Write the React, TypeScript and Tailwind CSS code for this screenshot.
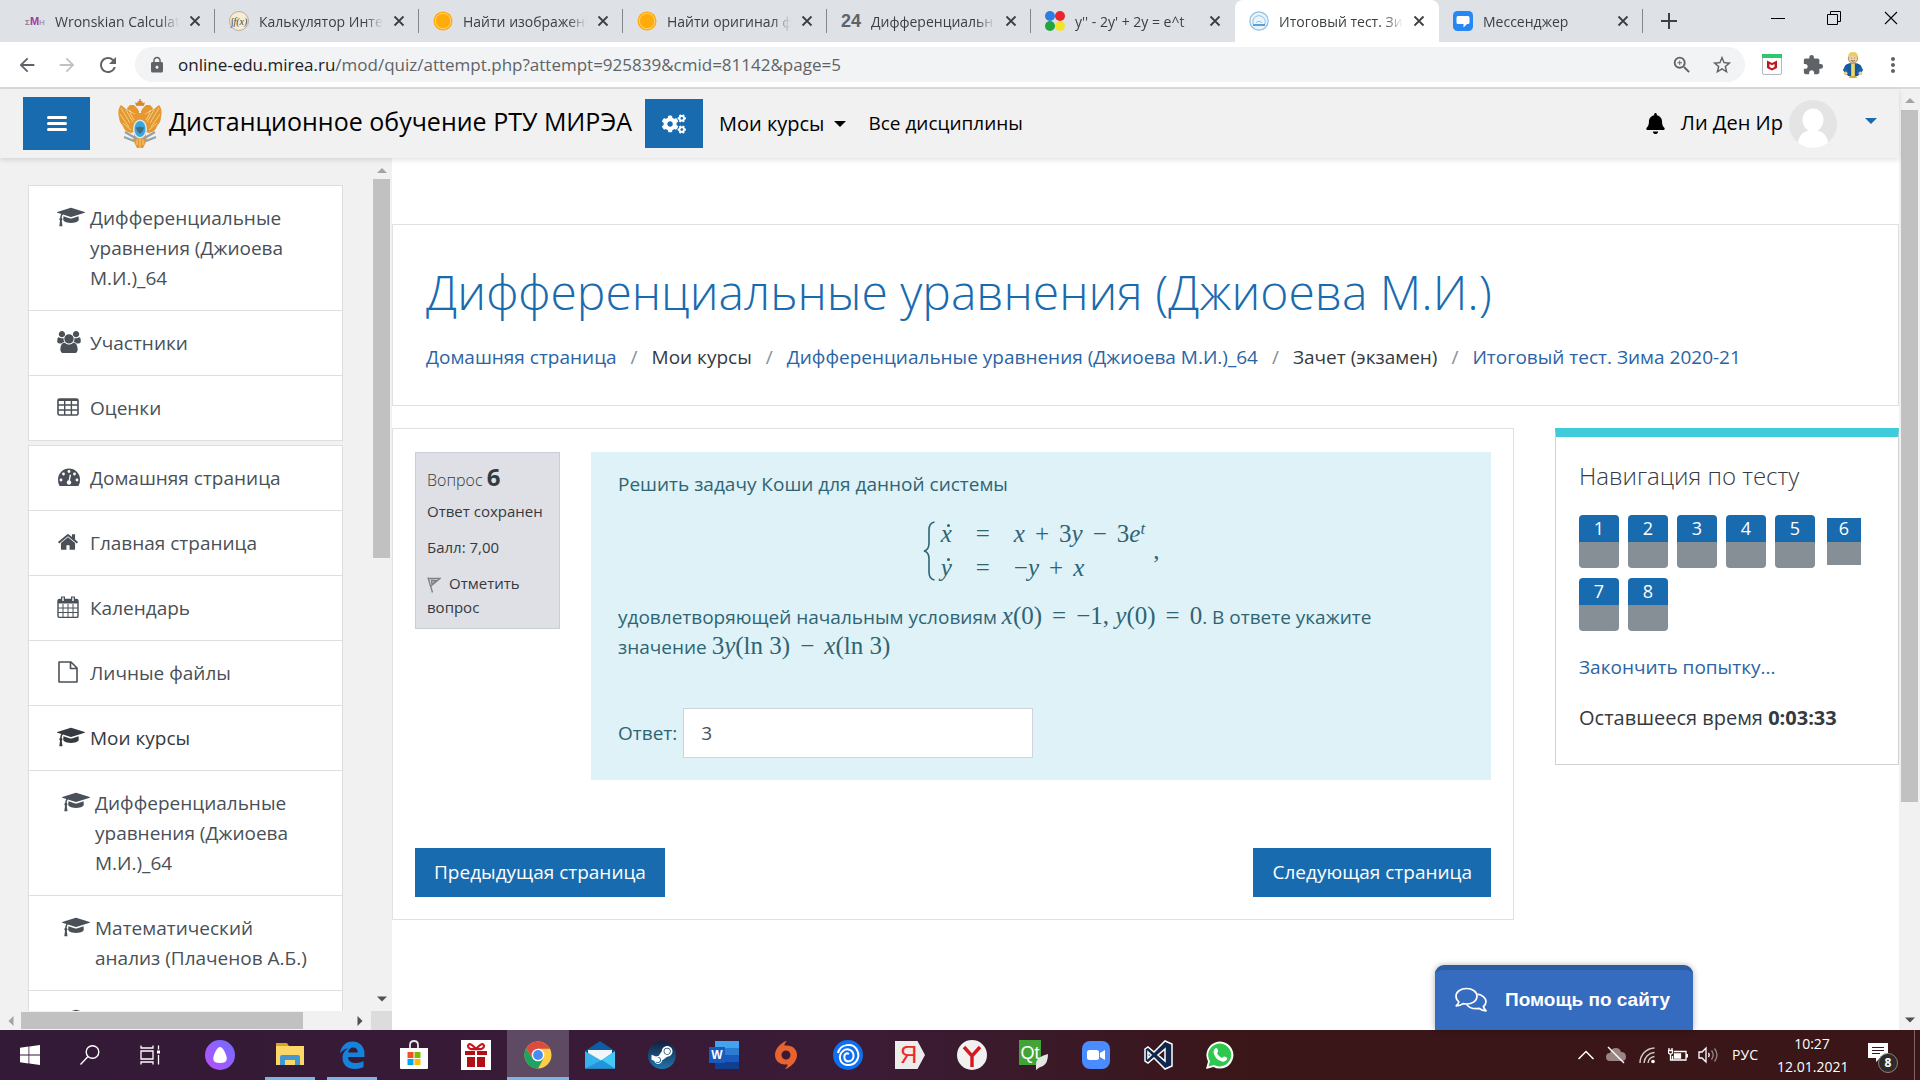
import React from "react";
import { FaBell, FaCogs, FaSteamSymbol } from "react-icons/fa";
import {
  MdArrowBack,
  MdArrowForward,
  MdExtension,
  MdLock,
  MdMoreVert,
  MdRefresh,
  MdStarBorder,
  MdZoomIn,
} from "react-icons/md";

/* ---------- small drawings ---------- */

const CapIcon = () => (
  <svg viewBox="0 0 2304 1792" className="h-[22px] w-7" fill="currentColor">
    <path d="M1774 836l16 284q4 72-82 133.5t-235 97.5-321 36-321-36-235-97.5-82-133.5l16-284 551 174q34 10 71 10t71-10zm530-324q0 23-22 31l-1120 352q-4 1-10 1t-10-1l-652-206q-43 34-71 111.5t-34 178.5q63 36 63 109 0 69-58 107l58 433q2 14-8 25-9 11-24 11h-192q-15 0-24-11-10-11-8-25l58-433q-58-38-58-107 0-73 65-111 11-207 98-330l-333-104q-22-8-22-31t22-31l1120-352q4-1 10-1t10 1l1120 352q22 8 22 31z" />
  </svg>
);

const UsersIcon = () => (
  <svg viewBox="0 0 1920 1792" className="h-[22px] w-6" fill="currentColor">
    <path d="M593 896q-162 5-265 128h-134q-82 0-138-40.5t-56-118.5q0-353 124-353 6 0 43.5 21t97.5 42.5 119 21.5q67 0 133-23-5 37-5 66 0 139 81 256zm1071 637q0 120-73 189.5t-194 69.5h-874q-121 0-194-69.5t-73-189.5q0-53 3.5-103.5t14-109 26.5-108.5 43-97.5 62-81 85.5-53.5 111.5-20q10 0 43 21.5t73 48 107 48 135 21.5 135-21.5 107-48 73-48 43-21.5q61 0 111.5 20t85.5 53.5 62 81 43 97.5 26.5 108.5 14 109 3.5 103.5zm-1024-1277q0 106-75 181t-181 75-181-75-75-181 75-181 181-75 181 75 75 181zm704 384q0 159-112.5 271.5t-271.5 112.5-271.5-112.5-112.5-271.5 112.5-271.5 271.5-112.5 271.5 112.5 112.5 271.5zm576 225q0 78-56 118.5t-138 40.5h-134q-103-123-265-128 81-117 81-256 0-29-5-66 66 23 133 23 59 0 119-21.5t97.5-42.5 43.5-21q124 0 124 353zm-128-609q0 106-75 181t-181 75-181-75-75-181 75-181 181-75 181 75 75 181z" />
  </svg>
);

const TableIcon = () => (
  <svg viewBox="0 0 22 20" className="h-5 w-[22px]" fill="none" stroke="currentColor">
    <rect x="1" y="2" width="20" height="16" rx="1.5" strokeWidth="1.6" />
    <path d="M1 3h20" strokeWidth="2" />
    <path d="M1 8h20M1 13h20M7.7 3v15M14.4 3v15" strokeWidth="1.4" />
  </svg>
);

const GaugeIcon = () => (
  <svg viewBox="0 0 24 20" className="h-5 w-6">
    <path d="M2.6 19A11 11 0 0 1 1 12.5 11 11 0 0 1 23 12.5 11 11 0 0 1 21.4 19Z" fill="currentColor" />
    <g fill="#fff">
      <circle cx="4" cy="13" r="1.4" />
      <circle cx="6.5" cy="7" r="1.4" />
      <circle cx="12" cy="4.5" r="1.4" />
      <circle cx="17.5" cy="7" r="1.4" />
      <circle cx="20" cy="13" r="1.4" />
      <circle cx="12" cy="15.5" r="2.2" />
      <path d="M12.7 7.5l1.4.4-1.6 7h-1.2z" />
    </g>
  </svg>
);

const HomeIcon = () => (
  <svg viewBox="0 0 1792 1792" className="size-[22px]" fill="currentColor">
    <path d="M1472 992v480q0 26-19 45t-45 19h-384v-384h-256v384h-384q-26 0-45-19t-19-45v-480q0-1 .5-3t.5-3l575-474 575 474q1 2 1 6zm223-69l-62 74q-8 9-21 11h-3q-13 0-21-7l-692-577-692 577q-12 8-24 7-13-2-21-11l-62-74q-8-10-7-23.500t11-21.500l719-599q32-26 76-26t76 26l244 204v-195q0-14 9-23t23-9h192q14 0 23 9t9 23v408l219 182q10 8 11 21.500t-7 23.500z" />
  </svg>
);

const CalendarIcon = () => (
  <svg viewBox="0 0 22 22" className="size-[22px]" fill="none" stroke="currentColor">
    <rect x="1" y="3.5" width="20" height="18" rx="1.5" strokeWidth="1.4" />
    <path d="M1 5.5h20" strokeWidth="4" />
    <path d="M1 12h20M1 16.5h20M6 8v13M11 8v13M16 8v13" strokeWidth="1" />
    <path d="M6 .5v5M16 .5v5" strokeWidth="4" />
    <path d="M6 1.500v3.500M16 1.500v3.500" strokeWidth="1.4" stroke="#fff" />
  </svg>
);

const FileIcon = () => (
  <svg viewBox="0 0 22 22" className="size-[22px]" fill="none" stroke="currentColor" strokeWidth="1.6">
    <path d="M2 1h12l6 6v14H2zM13.500 1v6.500H20" strokeLinejoin="round" />
  </svg>
);

const Eagle = () => (
  <svg viewBox="0 0 44 50" className="h-[50px] w-11 flex-none">
    <g fill="#e5982f">
      <path d="M17 15C13 14 9 11 3 6c-3 3-3 9-2 12 0 4 2 7 4 9 1 4 4 6 8 7l6-2z" />
      <path d="M27 15c4-1 8-4 14-9 3 3 3 9 2 12 0 4-2 7-4 9-1 4-4 6-8 7l-6-2z" />
      <path d="M21 15l-6-1-4-3-1 1-1-3 3-3 4 0 3 3 2 3zM23 15l6-1 4-3 1 1 1-3-3-3-4 0-3 3-2 3z" />
      <path d="M17 33h10l2 8-4 8h-6l-4-8z" />
      <path d="M18 7l-1-4 2 1 1-2h4l1 2 2-1-1 4z" />
      <rect x="14" y="14" width="16" height="18" rx="5" />
    </g>
    <g stroke="#f8d58a" strokeWidth=".9" fill="none">
      <path d="M3 9l9 15M2 15l9 13M5 24l8 7M8 11l7 12M12 14l4 7" />
      <path d="M41 9l-9 15M42 15l-9 13M39 24l-8 7M36 11l-7 12M32 14l-4 7" />
      <path d="M19 40v6M22 40v9M25 40v6" />
    </g>
    <path d="M18 5h8M22 0v4" stroke="#c9762c" strokeWidth="1.2" fill="none" />
    <path d="M7 33l12 7M37 33l-12 7M6 38l10 4M38 38l-10 4" stroke="#97a0a8" strokeWidth="2.2" />
    <ellipse cx="22" cy="30" rx="7" ry="9.5" fill="#dfe7ee" />
    <ellipse cx="22" cy="30" rx="5.5" ry="8" fill="#38a8dc" />
    <path d="M18 29c2-3 3 2 4-3 1 5 3 0 4 3-1 3-2 4-4 6-2-2-3-3-4-6z" fill="#3c6f86" />
  </svg>
);

const ChatIcon = () => (
  <svg viewBox="0 0 32 26" className="h-[26px] w-8" fill="none" stroke="#fff" strokeWidth="1.7" strokeLinejoin="round">
    <path d="M11.500 1.500c6 0 10.500 3.300 10.500 7.800s-4.500 7.700-10.500 7.700c-1.200 0-2.400-.1-3.500-.4C6.300 18 4 18.800 1.200 18.900c1.300-1.200 2.300-2.600 2.600-4.100C2 13.400 1 11.500 1 9.300c0-4.500 4.500-7.800 10.500-7.800z" />
    <path d="M22.500 7.200c4.800.7 8.500 3.800 8.500 7.300 0 2-1 3.700-2.600 5 .3 1.500 1.300 2.900 2.600 4.300-2.800-.1-5.100-.9-6.800-2.400-1 .2-2.100.3-3.200.3-4.200 0-7.600-1.700-9.300-4.300" />
  </svg>
);

const Triangle = ({ dir, cls }: { dir: "up" | "down" | "left" | "right"; cls: string }) => {
  const d = {
    up: "M5 2l5 5H0z",
    down: "M0 2.500h10l-5 5z",
    left: "M7.500 0v10l-5-5z",
    right: "M2.500 0v10l5-5z",
  }[dir];
  return (
    <svg viewBox="0 0 10 10" className={"flex-none " + cls} fill="currentColor">
      <path d={d} />
    </svg>
  );
};

/* ---------- browser chrome ---------- */

const SunFavicon = () => (
  <svg viewBox="0 0 20 20" className="size-5">
    <circle cx="10" cy="10" r="9.5" fill="#ffab0a" />
    <circle cx="10" cy="10" r="7.7" fill="none" stroke="#ffd68a" strokeWidth=".9" />
  </svg>
);

const tabs: { title: string; icon: React.ReactNode; active?: boolean }[] = [
  {
    title: "Wronskian Calculator",
    icon: (
      <span className="font-['Liberation_Sans'] text-[11px] font-bold text-[#a9379d]">
        <span className="text-[8px] text-[#8a7f8a]">Σ</span>M<span className="text-[8px] text-[#a9a0a9]">H</span>
      </span>
    ),
  },
  {
    title: "Калькулятор Интегралов",
    icon: (
      <span className="flex size-5 items-center justify-center rounded-full border border-[#b9ad96] bg-[#f5ecd6] font-['Liberation_Serif'] text-[10px] italic text-[#4a4336]">
        ∫f(x)
      </span>
    ),
  },
  { title: "Найти изображение", icon: <SunFavicon /> },
  { title: "Найти оригинал функции", icon: <SunFavicon /> },
  {
    title: "Дифференциальные",
    icon: <span className="font-['Liberation_Sans'] text-lg font-bold text-[#5f6368]">24</span>,
  },
  {
    title: "y'' - 2y' + 2y = e^t",
    icon: (
      <svg viewBox="0 0 20 20" className="size-5">
        <circle cx="5" cy="5" r="5" fill="#2f7de1" />
        <circle cx="15" cy="5" r="5" fill="#e8252a" />
        <circle cx="5" cy="15" r="5" fill="#22a53a" />
        <circle cx="15" cy="15" r="5" fill="#f2e32c" />
      </svg>
    ),
  },
  {
    title: "Итоговый тест. Зима",
    active: true,
    icon: (
      <svg viewBox="0 0 20 20" className="size-5" fill="none" stroke="#8fc1e6">
        <circle cx="10" cy="10" r="9.2" strokeWidth="1.2" fill="#eaf4fb" />
        <path d="M4 13V9a6 6 0 0 1 12 4M7 12a3.500 3.500 0 0 1 6 0" />
        <path d="M4 14h12" stroke="#5ba1d6" strokeWidth="2" />
      </svg>
    ),
  },
  {
    title: "Мессенджер",
    icon: (
      <svg viewBox="0 0 20 20" className="size-5">
        <rect width="20" height="20" rx="4.5" fill="#2787f5" />
        <path d="M5 5h10q1.500 0 1.500 1.500v5q0 1.500-1.500 1.500h-1l-3.500 3.500V13H5q-1.500 0-1.500-1.500v-5Q3.500 5 5 5z" fill="#fff" />
      </svg>
    ),
  },
];

const CrossIcon = ({ cls }: { cls: string }) => (
  <svg viewBox="0 0 12 12" className={cls} fill="none" stroke="currentColor">
    <path d="M1.500 1.500l9 9M10.500 1.500l-9 9" />
  </svg>
);

function TabStrip() {
  return (
    <div className="flex h-[42px] flex-none justify-between bg-[#dee1e6] pl-[11px]">
      <div className="flex min-w-0 flex-1">
        {tabs.map((t, i) => (
          <div
            key={t.title}
            className={
              "flex w-[204px] min-w-0 items-center pl-3.5 " + (t.active ? "rounded-t-lg bg-white" : "")
            }
          >
            <span className="flex w-5 flex-none items-center justify-center whitespace-nowrap">{t.icon}</span>
            <span className="ml-2.5 w-[124px] overflow-hidden whitespace-nowrap text-[14px] text-[#3c4043] [mask-image:linear-gradient(to_right,#000_85%,transparent)]">
              {t.title}
            </span>
            <button aria-label="Закрыть вкладку" className="ml-2 flex size-4 flex-none items-center justify-center text-[#3c4043]">
              <CrossIcon cls="size-3 stroke-[1.8]" />
            </button>
            <span className={"ml-auto h-6 w-px " + (t.active || i === 5 ? "bg-transparent" : "bg-[#83868b]")} />
          </div>
        ))}
        <button aria-label="Новая вкладка" className="ml-[18px] flex items-center text-[#3c4043]">
          <svg viewBox="0 0 16 16" className="size-4" stroke="currentColor" strokeWidth="2">
            <path d="M8 0v16M0 8h16" />
          </svg>
        </button>
      </div>
      <div className="flex h-9 text-black">
        <button aria-label="Свернуть" className="flex w-14 items-center justify-center">
          <span className="h-px w-3.5 bg-current" />
        </button>
        <button aria-label="Развернуть" className="flex w-14 items-center justify-center">
          <svg viewBox="0 0 14 14" className="size-3.5" fill="none" stroke="currentColor">
            <path d="M.5 3.500h10v10h-10zM3.500 3.500v-3h10v10h-3" />
          </svg>
        </button>
        <button aria-label="Закрыть" className="flex w-[58px] items-center justify-center">
          <CrossIcon cls="size-4 stroke-[0.8]" />
        </button>
      </div>
    </div>
  );
}

function Toolbar() {
  return (
    <div className="flex h-[47px] flex-none items-center border-b-2 border-[#d9dadc] bg-white pl-4 pr-[15px] text-[#5f6368]">
      <button aria-label="Назад" className="w-[22px] text-[22px]">
        <MdArrowBack />
      </button>
      <button aria-label="Вперёд" className="ml-[18px] w-[22px] text-[22px] text-[#bfc1c4]">
        <MdArrowForward />
      </button>
      <button aria-label="Обновить" className="ml-[18px] w-6 text-2xl">
        <MdRefresh />
      </button>
      <div className="ml-[15px] flex h-[35px] flex-1 items-center rounded-full bg-[#f1f3f4] pl-[13px] pr-3">
        <MdLock className="size-[18px] flex-none" />
        <div role="textbox" aria-label="Адресная строка" className="ml-3 flex-1 whitespace-nowrap text-[17px]">
          <span className="text-[#202124]">online-edu.mirea.ru</span>
          <span>/mod/quiz/attempt.php?attempt=925839&amp;cmid=81142&amp;page=5</span>
        </div>
        <button aria-label="Масштаб" className="text-[22px]">
          <MdZoomIn />
        </button>
        <button aria-label="В закладки" className="ml-[18px] text-[22px]">
          <MdStarBorder />
        </button>
      </div>
      <svg viewBox="0 0 20 21" className="ml-[17px] h-[21px] w-5">
        <rect x=".5" y=".5" width="19" height="20" rx="1.5" fill="#fff" stroke="#b5b8bb" />
        <path d="M0 0h20v4H0z" fill="#2dc76d" />
        <path d="M5 6.500l5 2.500 5-2.500v7.500l-5 2.500-5-2.500zM7.500 10v3l2.500 1.300 2.500-1.300v-3L10 11.200z" fill="#c01818" fillRule="evenodd" />
      </svg>
      <MdExtension className="ml-5 size-[22px]" />
      <svg viewBox="0 0 26 28" className="ml-[17px] h-7 w-6">
        <path d="M3 18q1-5 6-6h8q5 1 6 6l-1 5-4 3H8l-4-3z" fill="#17589c" />
        <path d="M11 12h4v14h-4z" fill="#eed66b" />
        <path d="M2 19l4-3 3 6-4 3zM24 19l-4-3-3 6 4 3z" fill="#1a62ad" />
        <circle cx="5" cy="23" r="2" fill="#efc999" />
        <circle cx="21" cy="23" r="2" fill="#efc999" />
        <circle cx="13" cy="7" r="5" fill="#f1d0a4" stroke="#5b4b2c" strokeWidth=".6" />
        <path d="M8 6q-1-6 5-6 6 0 5 6-2-2-5-2T8 6z" fill="#e9cf62" />
        <path d="M11 6.500h.8M14.500 6.500h.8M11 9.200q2 1.300 4 0" stroke="#4a3a22" strokeWidth=".8" fill="none" />
        <path d="M9 26h8v2H9z" fill="#caa43b" />
      </svg>
      <button aria-label="Меню" className="ml-4 text-2xl">
        <MdMoreVert />
      </button>
    </div>
  );
}

/* ---------- page ---------- */

function SiteHeader() {
  return (
    <header className="z-10 flex h-[69px] flex-none items-center bg-[#f1f1f1] pl-[23px] pr-[22px] text-black shadow-[0_2px_5px_rgba(0,0,0,0.12)]">
      <button aria-label="Меню сайта" className="flex h-[53px] w-[67px] items-center justify-center bg-[#196bb0]">
        <span className="flex w-5 flex-col gap-[3px]">
          <span className="h-[3px] rounded-sm bg-white" />
          <span className="h-[3px] rounded-sm bg-white" />
          <span className="h-[3px] rounded-sm bg-white" />
        </span>
      </button>
      <a href="#home" className="ml-7 flex items-center">
        <Eagle />
        <span className="ml-[7px] whitespace-nowrap pb-1 text-[25px]">Дистанционное обучение РТУ МИРЭА</span>
      </a>
      <button aria-label="Настройки" className="ml-[13px] flex h-[49px] w-[58px] items-center justify-center bg-[#196bb0] text-2xl text-white">
        <FaCogs />
      </button>
      <button className="ml-4 flex items-center whitespace-nowrap text-[20px]">
        Мои курсы <Triangle dir="down" cls="ml-2.5 size-3" />
      </button>
      <a href="#all" className="ml-[22px] whitespace-nowrap text-[19px]">
        Все дисциплины
      </a>
      <div className="ml-auto flex items-center">
        <FaBell className="size-[21px]" />
        <span className="ml-[15px] whitespace-nowrap pb-0.5 text-[20px]">Ли Ден Ир</span>
        <svg viewBox="0 0 48 48" className="ml-1.5 size-12">
          <clipPath id="ava">
            <circle cx="24" cy="24" r="24" />
          </clipPath>
          <g clipPath="url(#ava)">
            <path d="M0 0h48v48H0z" fill="#e4e4e4" />
            <ellipse cx="24" cy="20" rx="10.5" ry="11.5" fill="#fff" />
            <path d="M8 50q0-20 16-20t16 20z" fill="#fff" />
          </g>
        </svg>
        <Triangle dir="down" cls="mb-1.5 ml-7 size-3 text-[#196bb0]" />
      </div>
    </header>
  );
}

type Item = { label: string; icon: React.ReactNode; nested?: boolean; current?: boolean };

const courseItems: Item[] = [
  { label: "Дифференциальные уравнения (Джиоева М.И.)_64", icon: <CapIcon /> },
  { label: "Участники", icon: <UsersIcon /> },
  { label: "Оценки", icon: <TableIcon /> },
];

const siteItems: Item[] = [
  { label: "Домашняя страница", icon: <GaugeIcon /> },
  { label: "Главная страница", icon: <HomeIcon /> },
  { label: "Календарь", icon: <CalendarIcon /> },
  { label: "Личные файлы", icon: <FileIcon /> },
  { label: "Мои курсы", icon: <CapIcon />, current: true },
  { label: "Дифференциальные уравнения (Джиоева М.И.)_64", icon: <CapIcon />, nested: true },
  { label: "Математический анализ (Плаченов А.Б.)", icon: <CapIcon />, nested: true },
];

const NavList = ({ items, children }: { items: Item[]; children?: React.ReactNode }) => (
  <ul className="flex-none border border-[#dcdedf] bg-white">
    {items.map((it) => (
      <li key={it.label} className="border-b border-[#dcdedf] last:border-b-0">
        <a
          href="#nav"
          className={
            "flex py-[17px] pr-5 text-[19px] leading-[30px] " +
            (it.nested ? "pl-[33px] " : "pl-7 ") +
            (it.current ? "text-[#343a40]" : "text-[#495057]")
          }
        >
          <span className="flex h-[30px] w-[33px] flex-none items-center pb-0.5">{it.icon}</span>
          <span>{it.label}</span>
        </a>
      </li>
    ))}
    {children}
  </ul>
);

function Sidebar() {
  return (
    <aside className="flex w-[392px] flex-none flex-col bg-[#f1f1f1]">
      <div className="flex min-h-0 flex-1">
        <nav className="flex min-h-0 flex-1 flex-col gap-1 overflow-hidden pl-7 pr-7 pt-[27px]">
          <NavList items={courseItems} />
          <NavList items={siteItems}>
            <li>
              <a href="#nav" aria-label="Следующий курс" className="block py-[17px] pl-[33px] text-[#495057]">
                <CapIcon />
              </a>
            </li>
          </NavList>
        </nav>
        <div className="flex w-[21px] flex-col items-center pb-[7px] pt-2 text-[#a3a3a3]">
          <Triangle dir="up" cls="size-2.5" />
          <div className="mt-[3px] h-[379px] w-[17px] bg-[#c1c1c1]" />
          <Triangle dir="down" cls="mt-auto size-2.5 text-[#505050]" />
        </div>
      </div>
      <div className="flex h-[19px] flex-none items-center pl-1.5 text-[#a3a3a3]">
        <Triangle dir="left" cls="size-2.5" />
        <div className="ml-[5px] h-[17px] w-[282px] bg-[#c1c1c1]" />
        <Triangle dir="right" cls="ml-auto mr-[6px] size-2.5 text-[#505050]" />
        <div className="h-full w-[21px] bg-[#dcdcdc]" />
      </div>
    </aside>
  );
}

const V = ({ children }: { children: string }) => <i>{children}</i>;
const Op = ({ children }: { children: string }) => <span className="mx-2.5">{children}</span>;
const Dot = ({ children }: { children: string }) => (
  <span className="relative inline-block">
    <i>{children}</i>
    <span className="absolute left-1.5 top-[7px] size-[3px] rounded-full bg-current" />
  </span>
);

function Formula() {
  return (
    <div className="mt-[18px] flex items-center justify-center font-['Liberation_Serif'] text-[25px]">
      <svg viewBox="0 0 12 60" className="h-[60px] w-3" fill="none" stroke="currentColor" strokeWidth="1.6">
        <path d="M11.500 1Q6 2 6 9v13q0 7-5 8 5 1 5 8v13q0 7 5.500 8" />
      </svg>
      <div className="ml-1.5 grid grid-cols-[auto_auto_auto] gap-x-6 leading-[34px]">
        <Dot>x</Dot>
        <span>=</span>
        <span>
          <V>x</V>
          <Op>+</Op>3<V>y</V>
          <Op>−</Op>3<V>e</V>
          <sup className="text-[17px] leading-none">
            <V>t</V>
          </sup>
        </span>
        <Dot>y</Dot>
        <span>=</span>
        <span>
          −<V>y</V>
          <Op>+</Op>
          <V>x</V>
        </span>
      </div>
      <span className="ml-2">,</span>
    </div>
  );
}

const crumbs: { t: string; link: boolean }[] = [
  { t: "Домашняя страница", link: true },
  { t: "Мои курсы", link: false },
  { t: "Дифференциальные уравнения (Джиоева М.И.)_64", link: true },
  { t: "Зачет (экзамен)", link: false },
  { t: "Итоговый тест. Зима 2020-21", link: true },
];

function Main() {
  return (
    <main className="relative min-w-0 flex-1 bg-white pt-[66px] text-[#343a40]">
      <div className="border border-[#dfe1e3] px-[33px] pb-8 pt-8">
        <h1 className="whitespace-nowrap text-5xl font-light leading-[70px] text-[#196bb0]">
          Дифференциальные уравнения (Джиоева М.И.)
        </h1>
        <ol className="mt-[14px] flex text-[19px] leading-8">
          {crumbs.map((c, i) => (
            <li key={c.t} className="whitespace-nowrap">
              {i > 0 && <span className="mx-3.5 text-[#868e96]">/</span>}
              {c.link ? (
                <a href="#crumb" className="text-[#2b64a5]">
                  {c.t}
                </a>
              ) : (
                c.t
              )}
            </li>
          ))}
        </ol>
      </div>

      <div className="mt-[22px] flex items-start gap-[41px]">
        <section className="flex-1 border border-[#dfe1e3] px-[22px] pb-[22px] pt-[23px]">
          <div className="flex items-start gap-[31px]">
            <div className="w-[145px] flex-none border border-[#c9ced6] bg-[#dee0e6] px-[11px] pb-[9px] pt-2 text-[15px] leading-6">
              <h3 className="text-base font-light leading-[34px]">
                Вопрос <span className="text-2xl font-bold">6</span>
              </h3>
              <div className="mt-0.5 whitespace-nowrap">Ответ сохранен</div>
              <div className="mt-3">Балл: 7,00</div>
              <a href="#flag" className="mt-3 block">
                <svg viewBox="0 0 14 16" className="mr-2 inline-block h-4 w-3.5" fill="none" stroke="#7d8288" strokeWidth="1.4">
                  <path d="M1 .5l4.500 15M1.500 1.500h11.500L4 9M4.500 3.500l5 .2-4.500 3.500z" />
                </svg>
                Отметить вопрос
              </a>
            </div>
            <div className="min-w-0 flex-1 bg-[#def2f8] px-[27px] pb-[22px] pt-[17px] text-[19px] leading-[30px] text-[#2f6473]">
              <p>Решить задачу Коши для данной системы</p>
              <Formula />
              <p className="mt-[17px] max-w-[800px]">
                удовлетворяющей начальным условиям{" "}
                <span className="font-['Liberation_Serif'] text-[25px] leading-none">
                  <V>x</V>(0)<Op>=</Op>−1, <V>y</V>(0)<Op>=</Op>0
                </span>
                . В ответе укажите значение{" "}
                <span className="whitespace-nowrap font-['Liberation_Serif'] text-[25px] leading-none">
                  3<V>y</V>(ln 3)<Op>−</Op>
                  <V>x</V>(ln 3)
                </span>
              </p>
              <div className="mt-[46px] flex items-center">
                <label htmlFor="answer">Ответ:</label>
                <input
                  id="answer"
                  defaultValue="3"
                  className="ml-1.5 h-[50px] w-[350px] border border-[#ced4da] bg-white px-[17px] text-[19px] text-[#495057]"
                />
              </div>
            </div>
          </div>
          <div className="mt-[68px] flex items-center justify-between text-[19px] text-white">
            <button className="h-[49px] bg-[#196bb0] px-[19px]">Предыдущая страница</button>
            <button className="h-[49px] bg-[#196bb0] px-[19px]">Следующая страница</button>
          </div>
        </section>

        <section className="w-[344px] flex-none border border-t-[9px] border-[#cfd3d6] border-t-[#3fcbda] px-[23px] pb-[31px] pt-[22px] text-[20px] leading-[30px]">
          <h2 className="text-2xl font-light leading-[34px]">Навигация по тесту</h2>
          <div className="mt-[22px] flex flex-wrap gap-x-[9px] gap-y-2.5">
            {[1, 2, 3, 4, 5, 6, 7, 8].map((n) => (
              <a
                key={n}
                href="#q"
                className={
                  "flex h-[53px] w-10 flex-col overflow-hidden text-center text-lg text-white " +
                  (n === 6 ? "border-[3px] border-white leading-[21px]" : "rounded leading-[27px]")
                }
              >
                <span className="flex-1 bg-[#196bb0]">{n}</span>
                <span className="flex-1 bg-[#868e96]" />
              </a>
            ))}
          </div>
          <a href="#finish" className="mt-[21px] block text-[19px] text-[#2b64a5]">
            Закончить попытку...
          </a>
          <div className="mt-[21px]">
            Оставшееся время <b>0:03:33</b>
          </div>
        </section>
      </div>

      <button className="absolute bottom-0 right-[206px] flex h-[65px] w-[258px] items-center rounded-t-[9px] border-t-[5px] border-[#2b5ba3] bg-[#366cbf] pl-5 font-['Liberation_Sans'] text-[19px] font-bold text-white shadow-[0_0_6px_rgba(0,0,0,0.3)]">
        <ChatIcon />
        <span className="ml-[18px] whitespace-nowrap">Помощь по сайту</span>
      </button>
    </main>
  );
}

/* ---------- taskbar ---------- */

const Svg = ({ children }: { children: React.ReactNode }) => (
  <svg viewBox="0 0 30 30" className="size-[30px]">
    {children}
  </svg>
);

type AppEntry = { name: string; icon: React.ReactNode; open?: boolean; focused?: boolean };

const apps: AppEntry[] = [
  {
    name: "Проводник",
    open: true,
    icon: (
      <Svg>
        <path d="M1 3h11l2 3H1z" fill="#dfa31b" />
        <path d="M1 6h28v19H1z" fill="#fbd767" />
        <path d="M5 25V17q0-2 2-2h16q2 0 2 2v8h-5v-5H10v5z" fill="#4398d3" />
      </Svg>
    ),
  },
  {
    name: "Edge",
    open: true,
    icon: (
      <Svg>
        <path
          d="M3 13.500C4 6 9 1.500 15.500 1.500c8 0 12 6 12 12.500v3H11c0 4 3.500 6 8 6 3 0 5.500-.8 7.500-2v6c-2.500 1.300-5.500 2-8.500 2C10 29 5.500 24.500 5.500 18c0-4.500 2.300-8 6-9.800C8 8.500 5 10.500 3 13.500zM11.200 12.500h9.600c0-3-1.500-5-4.500-5s-4.800 2-5.100 5z"
          fill="#1583dc"
        />
      </Svg>
    ),
  },
  {
    name: "Microsoft Store",
    icon: (
      <Svg>
        <path d="M11 9V5q0-4 4-4t4 4v4" fill="none" stroke="#e6e6e6" strokeWidth="1.8" />
        <path d="M1 8h28v20q0 1-1 1H2q-1 0-1-1z" fill="#fff" />
        <path d="M8.500 12h6v6h-6z" fill="#f25022" />
        <path d="M15.500 12h6v6h-6z" fill="#7fba00" />
        <path d="M8.500 19h6v6h-6z" fill="#00a4ef" />
        <path d="M15.500 19h6v6h-6z" fill="#ffb900" />
      </Svg>
    ),
  },
  {
    name: "Подарки",
    icon: (
      <Svg>
        <path d="M0 0h30v30H0z" fill="#fff" />
        <path d="M15 9q-8 1-8-3 1-5 8 3 7-8 8-3 0 4-8 3z" fill="none" stroke="#c4161c" strokeWidth="2.2" />
        <path d="M4 11h10v4H4zM16 11h10v4H16zM6 17h8v10H6zM16 17h8v10h-8z" fill="#b01015" />
      </Svg>
    ),
  },
  {
    name: "Chrome",
    open: true,
    focused: true,
    icon: (
      <Svg>
        <circle cx="15" cy="15" r="13.5" fill="#ffcd46" />
        <path d="M3.300 8.200A13.500 13.500 0 0 0 15 28.500L20.500 18.500 9.500 18.500z" fill="#1da362" />
        <path d="M3.300 8.200L9.500 18.500 15 15V8.700L26.900 8.700A13.500 13.500 0 0 0 3.300 8.200z" fill="#dd4b3e" />
        <circle cx="15" cy="15" r="6.300" fill="#fff" />
        <circle cx="15" cy="15" r="4.900" fill="#4a8af4" />
      </Svg>
    ),
  },
  {
    name: "Почта",
    icon: (
      <Svg>
        <path d="M0 11L15 1l15 10z" fill="#0f5ba5" />
        <path d="M3 10h24v12H3z" fill="#f3f6f9" />
        <path d="M0 11l30 17.500H0z" fill="#35b3ea" />
        <path d="M30 11v17.500H0L17 20z" fill="#2094dd" />
        <path d="M30 11v17.500L17 20z" fill="#45c9f5" />
      </Svg>
    ),
  },
  {
    name: "Steam",
    icon: (
      <span className="flex size-7 items-center justify-center rounded-full bg-linear-to-b from-[#13203f] to-[#1b78ad] text-2xl text-white">
        <FaSteamSymbol />
      </span>
    ),
  },
  {
    name: "Word",
    icon: (
      <span className="relative flex h-7 w-[30px] items-center">
        <span className="absolute inset-y-0 left-1.5 right-0 flex flex-col">
          <span className="flex-1 bg-[#41a5ee]" />
          <span className="flex-1 bg-[#2b7cd3]" />
          <span className="flex-1 bg-[#185abd]" />
          <span className="flex-1 bg-[#103f91]" />
        </span>
        <span className="relative flex size-4 items-center justify-center bg-[#185abd] font-['Liberation_Sans'] text-xs font-bold text-white">
          W
        </span>
      </span>
    ),
  },
  {
    name: "Origin",
    icon: (
      <Svg>
        <path
          d="M16 1c-2 1.800-2.600 3.300-2.600 4.600C21 4.500 26 9 26 15c0 6-5 11-11 14h-1c1.800-1.800 2.500-3.500 2.600-4.800C9 25.500 4 21 4 15 4 9 9 3.500 15 1zM15 10.500a4.500 4.500 0 1 0 0 9 4.500 4.500 0 0 0 0-9z"
          fill="#e8632d"
        />
      </Svg>
    ),
  },
  {
    name: "Ubisoft Connect",
    icon: (
      <Svg>
        <circle cx="15" cy="15" r="15" fill="#0f70ef" />
        <path d="M5 13C7 4 20 2 24 10s-2 16-10 15S5 15 10 11s11 0 10.500 5.500-8 6.500-9 2 2-6 4.500-4.500" fill="none" stroke="#fff" strokeWidth="2" />
      </Svg>
    ),
  },
  {
    name: "Яндекс",
    icon: (
      <span className="flex h-7 w-[30px] items-center bg-[#ececec] pl-[5px] font-['Liberation_Sans'] text-2xl text-[#ee2a23] [clip-path:polygon(0_0,75%_0,100%_50%,75%_100%,0_100%)]">
        Я
      </span>
    ),
  },
  {
    name: "Яндекс.Браузер",
    icon: (
      <Svg>
        <circle cx="15" cy="15" r="15" fill="#f1f1f1" />
        <path d="M7 7l8 9 8-9M15 15v12" fill="none" stroke="#d51a1f" strokeWidth="3.4" />
      </Svg>
    ),
  },
  {
    name: "Qt Creator",
    icon: (
      <span className="relative flex size-[30px]">
        <span className="flex h-[25px] w-[22px] items-center justify-center bg-[#42a336] font-['Liberation_Sans'] text-lg text-white">Qt</span>
        <svg viewBox="0 0 14 16" className="absolute bottom-0 right-0 h-4 w-3.5">
          <path d="M13 0Q1 3 1 10v6q3-3 7-4 5-3 5-12z" fill="#e4e6e5" />
        </svg>
      </span>
    ),
  },
  {
    name: "Zoom",
    icon: (
      <Svg>
        <rect x="1" y="1" width="28" height="28" rx="8" fill="#4a8cff" />
        <rect x="6" y="10" width="12" height="10" rx="2.5" fill="#fff" />
        <path d="M19 13l5-3v10l-5-3z" fill="#fff" />
      </Svg>
    ),
  },
  {
    name: "Visual Studio",
    icon: (
      <Svg>
        <path
          d="M2 9l3-2 6 5L22 1l7 3v22l-7 3-11-11-6 5-3-2zM5 12v6l3-3zM22 9l-7 6 7 6z"
          fill="#10264d"
          fillRule="evenodd"
          stroke="#fff"
          strokeWidth="1.5"
        />
      </Svg>
    ),
  },
  {
    name: "WhatsApp",
    icon: (
      <Svg>
        <path d="M1 29l2-7.500A13.500 13.500 0 1 1 8.500 27z" fill="#fff" />
        <path d="M3.500 26.500l1.500-5.300A11.500 11.500 0 1 1 9 25z" fill="#2dc84d" />
        <path d="M10 8.500q2-1.500 3 2 .5 1.500-1 2.500 1.500 3.500 5 5 1.500-2 2.500-1.500 3.500 1 2.500 3-2 3.500-7 1.300T8.500 12.500Q8.500 9.500 10 8.500z" fill="#fff" />
      </Svg>
    ),
  },
];

function Taskbar() {
  return (
    <footer className="flex h-[50px] flex-none bg-linear-to-r from-[#331a36] via-[#3b1b36] via-45% to-[#3a1618] to-65% text-white">
      <button aria-label="Пуск" className="flex w-[60px] items-center justify-center">
        <svg viewBox="0 0 20 20" className="size-5" fill="#fff">
          <path d="M0 2.800l8.500-1.200v8H0zM9.300 1.500L20 0v9.600H9.300zM0 10.400h8.500v8L0 17.200zM9.300 10.400H20V20L9.300 18.500z" />
        </svg>
      </button>
      <button aria-label="Поиск" className="flex w-[60px] items-center justify-center">
        <svg viewBox="0 0 20 20" className="size-5" fill="none" stroke="#fff" strokeWidth="1.4">
          <circle cx="12.5" cy="7" r="6.3" />
          <path d="M8 11.500L.5 19.500" />
        </svg>
      </button>
      <button aria-label="Представление задач" className="flex w-[60px] items-center justify-center">
        <svg viewBox="0 0 20 20" className="size-5" fill="none" stroke="#fff" strokeWidth="1.3">
          <path d="M1 6h12v8H1zM1 .5V3h12V.5M1 19.500V17h12v2.500M18.500.5v4M18.500 10v9.500" />
          <path d="M17 7h3" strokeWidth="3" />
        </svg>
      </button>
      <button aria-label="Алиса" className="flex w-[79px] items-center justify-center">
        <span className="flex size-[30px] items-center justify-center rounded-full bg-linear-to-tr from-[#b84dff] to-[#6a6cff]">
          <svg viewBox="0 0 14 16" className="h-4 w-3.5">
            <path d="M7 0q3 0 6 8 3 8-6 8t-6-8q3-8 6-8z" fill="#fff" />
          </svg>
        </span>
      </button>
      {apps.map((a) => (
        <button
          key={a.name}
          aria-label={a.name}
          className={"relative flex w-[62px] items-center justify-center " + (a.focused ? "bg-[#5f4a63]" : "")}
        >
          {a.icon}
          {a.open && (
            <span className={"absolute bottom-0 h-[3px] bg-[#7cb4e8] " + (a.focused ? "inset-x-0" : "inset-x-1.5")} />
          )}
        </button>
      ))}
      <div className="ml-auto flex items-center">
        <svg viewBox="0 0 16 10" className="h-2.5 w-4" fill="none" stroke="#fff" strokeWidth="1.5">
          <path d="M.5 9L8 1.500 15.500 9" />
        </svg>
        <svg viewBox="0 0 20 18" className="ml-3 h-[18px] w-5">
          <path d="M4 15q-4 0-4-4t4-4q1-5 6-5 4 0 5 4 5 0 5 5 0 4-4 4z" fill="#9a8485" />
          <path d="M2 1l16 16" stroke="#fff" strokeWidth="1.4" />
        </svg>
        <svg viewBox="0 0 18 18" className="ml-3 size-[18px]" fill="none" stroke="#d8cccc" strokeWidth="1.4">
          <path d="M2 17A15 15 0 0 1 16.500 2M6 17A11 11 0 0 1 16.500 6.500M10 17a7 7 0 0 1 6.500-6.500" />
          <circle cx="15" cy="15.5" r="1.8" fill="#fff" stroke="none" />
        </svg>
        <svg viewBox="0 0 20 16" className="ml-3 h-4 w-5" fill="none" stroke="#fff" strokeWidth="1.3">
          <path d="M6 4.500h12v8.500H4.500V9M19.300 7v3.500M1 1v2M4 1v2M.5 3.500h4V6l-2 1.500L.5 6zM2.500 7.500V13h2" />
          <path d="M6.500 7h6v4h-6z" fill="#fff" />
        </svg>
        <svg viewBox="0 0 20 18" className="ml-2.5 h-[18px] w-5" fill="none" stroke="#fff" strokeWidth="1.3">
          <path d="M1 6h3l4-4v14l-4-4H1zM10.500 7q1.500 2 0 4" />
          <path d="M13.500 4.500q3.500 4.500 0 9M16.500 2.500q5 6.500 0 13" stroke="#9a8485" />
        </svg>
        <span className="ml-3.5 text-sm">РУС</span>
        <div className="ml-[19px] w-[70px] text-center text-sm leading-[23px]">
          <div>10:27</div>
          <div>12.01.2021</div>
        </div>
        <button aria-label="Уведомления" className="relative ml-[21px] mt-1.5 size-[30px]">
          <svg viewBox="0 0 20 20" className="absolute left-0 top-0 size-5">
            <path d="M0 0h20v15h-8l-4 4v-4H0z" fill="#fff" />
            <path d="M4 4.500h12M4 7.500h12M4 10.500h8" stroke="#3a1618" strokeWidth="1.2" />
          </svg>
          <span className="absolute bottom-0 right-0 flex size-5 items-center justify-center rounded-full border border-[#8b8080] bg-[#2f2b2b] text-xs font-bold">
            8
          </span>
        </button>
        <span className="ml-4 mr-[5px] h-[50px] w-px bg-[#7d6768]" />
      </div>
    </footer>
  );
}

export default function App() {
  return (
    <div className="flex h-screen flex-col overflow-hidden font-['Open_Sans','Noto_Sans',sans-serif]">
      <TabStrip />
      <Toolbar />
      <div className="flex min-h-0 flex-1">
        <div className="flex min-w-0 flex-1 flex-col">
          <SiteHeader />
          <div className="flex min-h-0 flex-1">
            <Sidebar />
            <Main />
          </div>
        </div>
        <div className="flex w-[21px] flex-none flex-col items-center bg-[#f1f1f1] pb-[5px] pt-[7px] text-[#a3a3a3]">
          <Triangle dir="up" cls="size-2.5" />
          <div className="mt-1 h-[692px] w-[17px] bg-[#c1c1c1]" />
          <Triangle dir="down" cls="mt-auto size-2.5 text-[#505050]" />
        </div>
      </div>
      <Taskbar />
    </div>
  );
}
